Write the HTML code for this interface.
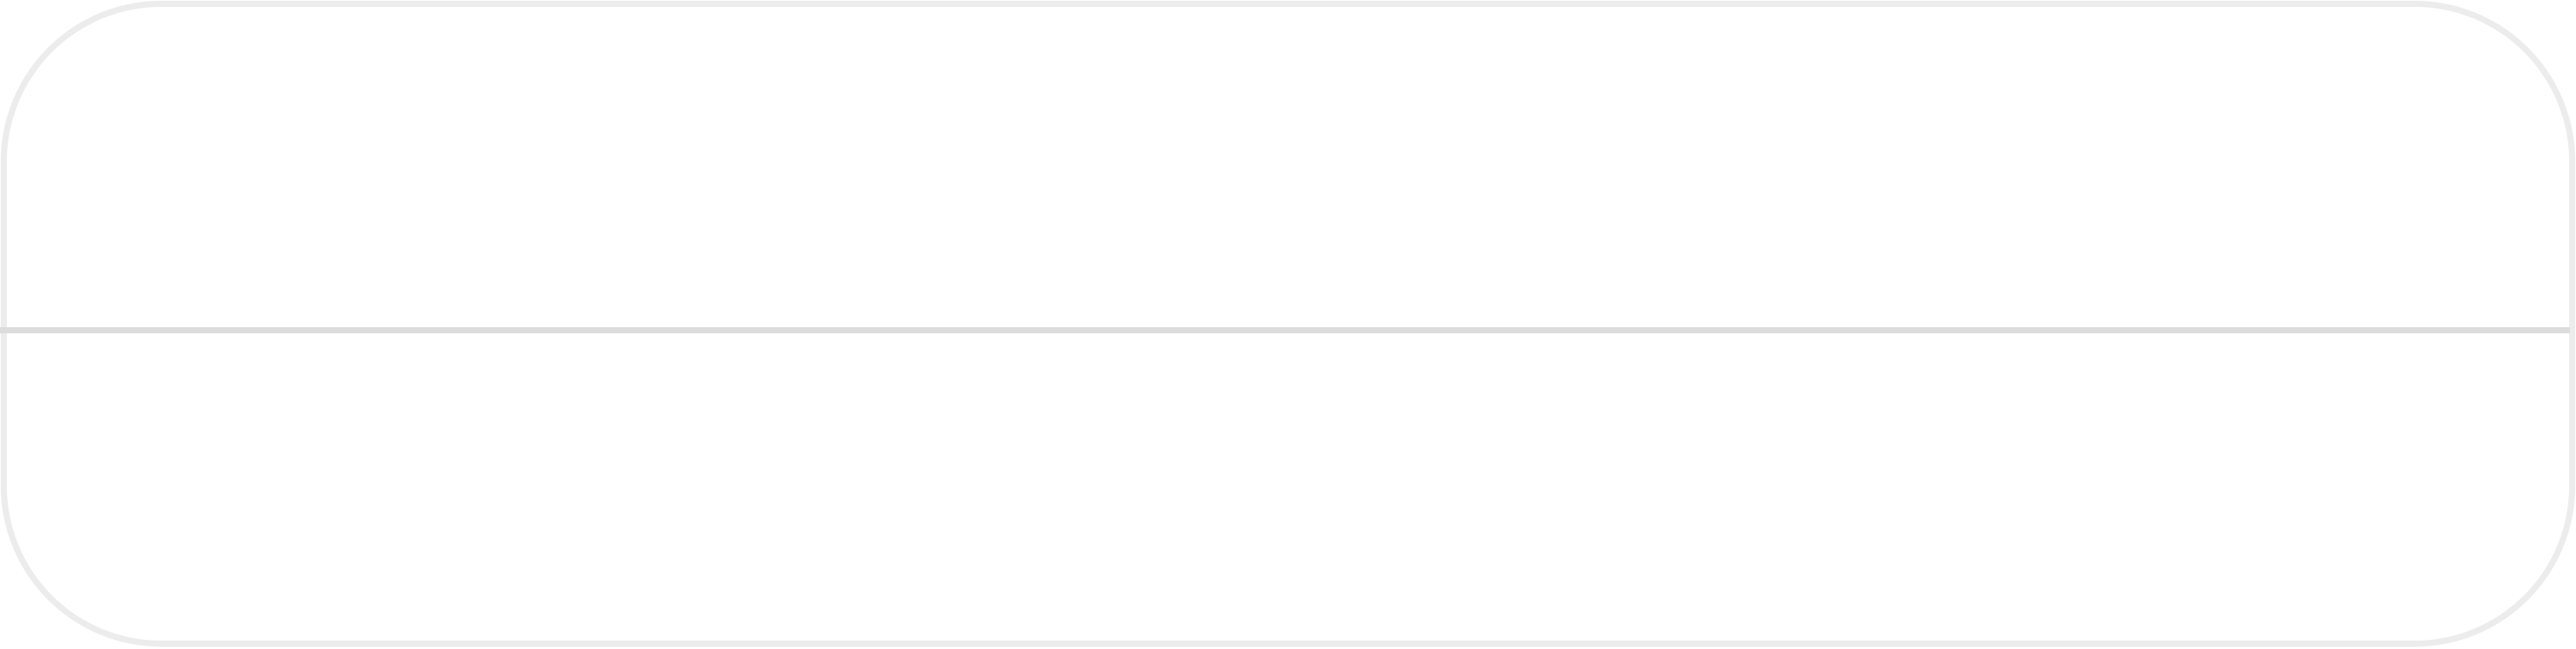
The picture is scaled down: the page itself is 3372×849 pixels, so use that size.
<!DOCTYPE html>
<html><head><style>
html,body{margin:0;padding:0;background:#fff;width:3372px;height:849px;overflow:hidden}
.box{position:absolute;left:1px;top:1px;width:3354px;height:829px;border:8px solid #ececec;border-radius:210px}
.line{position:absolute;left:0;top:428px;width:3364px;height:8px;background:#dcdcdc}
</style></head><body>
<div class="box"></div>
<div class="line"></div>
</body></html>
